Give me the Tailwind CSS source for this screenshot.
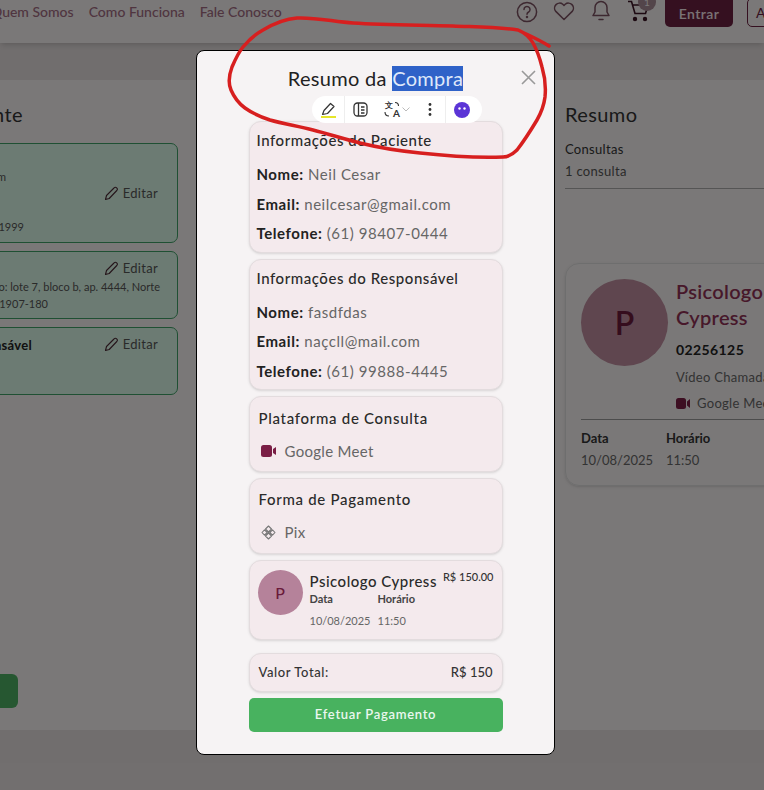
<!DOCTYPE html>
<html lang="pt-BR">
<head>
  <meta charset="UTF-8" />
  <title>Resumo da Compra</title>
  <script src="https://cdn.jsdelivr.net/npm/@tailwindcss/browser@4"></script>
</head>
<body class="font-['Lato',sans-serif] bg-[#f4f0f0] text-[#222]">
<div class="relative w-[764px] h-[790px] overflow-hidden flex flex-col">

  <!-- Header -->
  <header class="h-[43px] shrink-0 bg-[#f4f0f0] shadow-md flex justify-between items-start relative z-10">
    <nav class="flex gap-[15px] pt-[1px] -ml-[9px] text-[14px] font-medium text-[#a06a80]">
      <a>Quem Somos</a>
      <a>Como Funciona</a>
      <a>Fale Conosco</a>
    </nav>
    <div class="flex items-start -mr-[40px]">
      <svg class="mt-[1px] mr-[15px]" width="22" height="22" viewBox="0 0 22 22" fill="none" stroke="#7a5060" stroke-width="1.5"><circle cx="11" cy="11" r="9.6"/><path d="M8 8.500a3 3 0 1 1 4.600 2.500c-1 .6-1.600 1.100-1.600 2.300" stroke-linecap="round"/><circle cx="11" cy="16" r=".5"/></svg>
      <svg class="mr-[16px] mt-[1px]" width="22" height="20" viewBox="0 0 22 20" fill="none" stroke="#7a5060" stroke-width="1.5"><path d="M11 18.500 2.800 10.400a5 5 0 0 1 7-7.100L11 4.500l1.200-1.200a5 5 0 0 1 7 7.100z" stroke-linejoin="round"/></svg>
      <svg class="mr-[17px]" width="20" height="22" viewBox="0 0 20 22" fill="none" stroke="#7a5060" stroke-width="1.5"><path d="M10 1.500a6 6 0 0 0-6 6v4.500L2 15.500h16L16 12V7.500a6 6 0 0 0-6-6z" stroke-linejoin="round"/><path d="M8 19.500h4" stroke-linecap="round"/></svg>
      <div class="relative w-[24px] h-[24px] mr-[13px]">
        <svg width="22" height="22" viewBox="0 0 22 22" fill="none" stroke="#3a1524" stroke-width="1.6"><path d="M0 1.500h3.500L7 13.500h10.500L20 5H5"/><circle cx="7" cy="19" r="1.400" fill="#3a1524"/><circle cx="17" cy="19" r="1.400" fill="#3a1524"/></svg>
        <span class="absolute -top-[7px] left-[10px] w-[18px] h-[18px] rounded-full bg-[#a78a95] text-[#f4f0f0] text-[10px] text-center leading-[18px]">1</span>
      </div>
      <button class="-mt-[2px] w-[68px] h-[29px] rounded-b-[5px] bg-[#6a2140] text-[#f4e6ea] text-[14px] font-semibold tracking-[0.4px] pt-[2px]">Entrar</button>
      <button class="-mt-[2px] ml-[14px] w-[57px] h-[29px] rounded-[5px] border border-[#6a2140] text-[#6a2140] text-[14px] text-left pl-[8px]">Ajuda</button>
    </div>
  </header>

  <div class="h-[37px] shrink-0 bg-[#e3dddd]"></div>

  <!-- Conteudo da pagina -->
  <main class="flex-1 flex gap-[387px] -ml-[220px]">
    <section class="w-[398px] shrink-0 pt-[22px]">
      <h2 class="text-[20px] text-right pr-[155px] leading-[24px] tracking-[0.4px] text-[#333]">Dados do Paciente</h2>
      <div class="mt-[17px] h-[100px] rounded-[7px] border border-[#3fa066] bg-[#d9f6e6] relative text-[11px] text-[#555]">
        <p class="absolute right-[171px] top-[25px]">neilcesar@gmail.com</p>
        <p class="absolute right-[153px] top-[75px]">Nascimento: 10/07/1999</p>
        <p class="absolute right-[19px] top-[40px] flex items-center gap-[4px] text-[13px] tracking-[0.3px]"><svg width="15" height="15" viewBox="0 0 15 15" fill="none" stroke="#4a2a35" stroke-width="1.100"><path d="M1.500 13.500 2.500 9.500 10 2a1.800 1.800 0 0 1 2.800 2.500L5.200 12.500z" stroke-linejoin="round"/></svg>Editar</p>
      </div>
      <div class="mt-[8px] h-[68px] rounded-[7px] border border-[#3fa066] bg-[#d9f6e6] relative text-[11px] text-[#555]">
        <p class="absolute right-[17px] top-[27px] whitespace-nowrap">Complemento: lote 7, bloco b, ap. 4444, Norte</p>
        <p class="absolute right-[129px] top-[44px] whitespace-nowrap">Brasília - DF, 71907-180</p>
        <p class="absolute right-[19px] top-[7px] flex items-center gap-[4px] text-[13px] tracking-[0.3px]"><svg width="15" height="15" viewBox="0 0 15 15" fill="none" stroke="#4a2a35" stroke-width="1.100"><path d="M1.500 13.500 2.500 9.500 10 2a1.800 1.800 0 0 1 2.800 2.500L5.200 12.500z" stroke-linejoin="round"/></svg>Editar</p>
      </div>
      <div class="mt-[8px] h-[68px] rounded-[7px] border border-[#3fa066] bg-[#d9f6e6] relative">
        <p class="absolute right-[145px] top-[8px] text-[13px] font-bold text-[#222] whitespace-nowrap tracking-[0.3px]">Dados do Responsável</p>
        <p class="absolute right-[19px] top-[7px] flex items-center gap-[4px] text-[13px] text-[#555] tracking-[0.3px]"><svg width="15" height="15" viewBox="0 0 15 15" fill="none" stroke="#4a2a35" stroke-width="1.100"><path d="M1.500 13.500 2.500 9.500 10 2a1.800 1.800 0 0 1 2.800 2.500L5.200 12.500z" stroke-linejoin="round"/></svg>Editar</p>
      </div>
      <div class="mt-[279px] ml-[200px] w-[38px] h-[34px] rounded-[6px] bg-[#4caf63]"></div>
    </section>

    <section class="w-[240px] shrink-0 pt-[22px]">
      <h2 class="text-[20px] leading-[24px] tracking-[0.4px] text-[#333]">Resumo</h2>
      <p class="mt-[13px] text-[13px] leading-[20px] text-[#333] tracking-[0.3px]">Consultas</p>
      <p class="mt-[2px] text-[13px] leading-[20px] text-[#555] tracking-[0.3px]">1 consulta</p>
      <div class="mt-[7px] border-t border-[#aaa]"></div>
      <div class="mt-[74px] h-[223px] w-[240px] rounded-[14px] border border-[#ddd] shadow-sm px-[15px] pt-[14px]">
        <div class="flex gap-[8px]">
          <div class="w-[87px] h-[87px] shrink-0 mt-[1px] rounded-full bg-[#be8c9e] text-[#6a1a3a] text-[32px] font-semibold flex items-center justify-center">P</div>
          <div>
            <p class="text-[20px] font-semibold leading-[26px] text-[#8f3055] tracking-[0.3px]">Psicologo Cypress</p>
            <p class="mt-[9px] text-[14px] font-bold tracking-[0.4px]">02256125</p>
            <p class="mt-[8px] text-[13px] text-[#666] whitespace-nowrap tracking-[0.3px]">Vídeo Chamada</p>
            <p class="mt-[6px] text-[13px] text-[#666] flex items-center gap-[7px] whitespace-nowrap tracking-[0.3px]"><svg width="14" height="11" viewBox="0 0 14 11" fill="#7a1e45"><rect width="10" height="11" rx="2.500"/><path d="M11 3.500 14 1v9l-3-2.500z"/></svg>Google Meet</p>
          </div>
        </div>
        <div class="mt-[6px] border-t border-[#999] pt-[10px] grid grid-cols-[85px_1fr] gap-y-[6px] text-[13px] leading-[16px]">
          <p class="font-bold text-[#333]">Data</p><p class="font-bold text-[#333]">Horário</p>
          <p class="text-[#666]">10/08/2025</p><p class="text-[#666]">11:50</p>
        </div>
      </div>
    </section>
  </main>

  <footer class="h-[60px] shrink-0 bg-[#e3dddd]"></footer>

  <!-- Overlay -->
  <div class="absolute inset-0 z-20 bg-black/50"></div>

  <!-- Modal -->
  <div class="absolute z-30 left-[196px] top-[50px] w-[359px] h-[705px] rounded-[8px] border border-black bg-[#f6f3f4] flex flex-col items-center">
    <h1 class="mt-[15px] h-[25px] text-[20px] leading-[25px] tracking-[0.3px] text-[#222]">Resumo da <span class="bg-[#2f62c8] text-[#dfe8fa] inline-block">Compra</span></h1>
    <svg class="absolute left-[324px] top-[19px]" width="15" height="15" viewBox="0 0 15 15" stroke="#999" stroke-width="1.600"><path d="M1 1 14 14M14 1 1 14"/></svg>

    <div class="mt-[30px] w-[254px] flex flex-col">
      <div class="h-[132px] rounded-[12px] border border-[#e3dcde] shadow-sm bg-[#f4eaed] px-[7px] pt-[8px]">
        <h3 class="text-[15px] font-medium leading-[20px] tracking-[0.55px] text-[#2a2a2a]">Informações do Paciente</h3>
        <p class="mt-[14px] text-[15px] leading-[20px] text-[#666] tracking-[0.55px]"><b class="text-[#222]">Nome:</b> Neil Cesar</p>
        <p class="mt-[10px] text-[15px] leading-[20px] text-[#666] tracking-[0.55px]"><b class="text-[#222]">Email:</b> neilcesar@gmail.com</p>
        <p class="mt-[9px] text-[15px] leading-[20px] text-[#666] tracking-[0.55px]"><b class="text-[#222]">Telefone:</b> (61) 98407-0444</p>
      </div>
      <div class="mt-[6px] h-[131px] rounded-[12px] border border-[#e3dcde] shadow-sm bg-[#f4eaed] px-[7px] pt-[8px]">
        <h3 class="text-[15px] font-medium leading-[20px] tracking-[0.55px] text-[#2a2a2a]">Informações do Responsável</h3>
        <p class="mt-[14px] text-[15px] leading-[20px] text-[#666] tracking-[0.55px]"><b class="text-[#222]">Nome:</b> fasdfdas</p>
        <p class="mt-[9px] text-[15px] leading-[20px] text-[#666] tracking-[0.55px]"><b class="text-[#222]">Email:</b> naçcll@mail.com</p>
        <p class="mt-[10px] text-[15px] leading-[20px] text-[#666] tracking-[0.55px]"><b class="text-[#222]">Telefone:</b> (61) 99888-4445</p>
      </div>
      <div class="mt-[6px] h-[76px] rounded-[12px] border border-[#e3dcde] shadow-sm bg-[#f4eaed] px-[9px] pt-[11px]">
        <h3 class="text-[15px] font-medium leading-[20px] tracking-[0.7px] text-[#2a2a2a]">Plataforma de Consulta</h3>
        <p class="mt-[13px] flex items-center gap-[9px] text-[15px] leading-[20px] text-[#666] tracking-[0.3px]"><svg class="ml-[2px]" width="15" height="12" viewBox="0 0 15 12" fill="#7a1e45"><rect width="11" height="12" rx="2.500"/><path d="M12 4 15 2v8l-3-2z"/></svg>Google Meet</p>
      </div>
      <div class="mt-[6px] h-[76px] rounded-[12px] border border-[#e3dcde] shadow-sm bg-[#f4eaed] px-[9px] pt-[10px]">
        <h3 class="text-[15px] font-medium leading-[20px] tracking-[0.7px] text-[#2a2a2a]">Forma de Pagamento</h3>
        <p class="mt-[13px] flex items-center gap-[9px] text-[15px] leading-[20px] text-[#666] tracking-[0.3px]"><svg class="ml-[2px]" width="15" height="15" viewBox="0 0 15 15" fill="none" stroke="#777" stroke-width="1.100"><path d="M7.500 1 10.500 4 7.500 7 4.500 4zM7.500 8 10.500 11 7.500 14 4.500 11zM3.500 4.800 6.200 7.500 3.500 10.200 1 7.500zM11.500 4.800 14 7.500 11.500 10.200 8.800 7.500z" stroke-linejoin="round"/></svg>Pix</p>
      </div>
      <div class="mt-[6px] h-[80px] rounded-[12px] border border-[#e3dcde] shadow-sm bg-[#f4eaed] px-[8px] pt-[9px] flex gap-[7px]">
        <div class="w-[45px] h-[45px] shrink-0 rounded-full bg-[#b5829a] text-[#6a1a3a] text-[16px] font-medium flex items-center justify-center">P</div>
        <div class="flex-1">
          <div class="flex justify-between items-start">
            <p class="text-[15px] font-medium leading-[22px] tracking-[0.5px] text-[#2a2a2a] whitespace-nowrap">Psicologo Cypress</p>
            <p class="text-[11px] font-medium leading-[14px] text-[#333] whitespace-nowrap">R$ 150.00</p>
          </div>
          <div class="grid grid-cols-[68px_1fr] gap-y-[8px] text-[11px] leading-[14px]">
            <p class="font-bold text-[#444]">Data</p><p class="font-bold text-[#444]">Horário</p>
            <p class="text-[#666]">10/08/2025</p><p class="text-[#666]">11:50</p>
          </div>
        </div>
      </div>
      <div class="mt-[13px] h-[39px] rounded-[12px] border border-[#e3dcde] shadow-sm bg-[#f4eaed] px-[9px] flex items-center justify-between text-[13px] font-medium text-[#333]">
        <span class="tracking-[0.6px]">Valor Total:</span><span>R$ 150</span>
      </div>
      <button class="mt-[6px] h-[34px] rounded-[5px] bg-[#48b25f] text-[#eaf7ee] text-[13px] font-semibold tracking-[0.7px]">Efetuar Pagamento</button>
    </div>
  </div>

  <!-- Barra de extensao sobre a selecao -->
  <div class="absolute z-40 left-[312px] top-[96px] w-[170px] h-[27px] rounded-full bg-white flex items-center">
    <div class="w-[33px] h-full flex flex-col items-center justify-center border-r border-[#eee]">
      <svg width="15" height="14" viewBox="0 0 15 14" fill="none" stroke="#333" stroke-width="1.200"><path d="M1.500 12.500 3 8.500 9.500 1.500 13 4.500 6.500 11.500z" stroke-linejoin="round"/></svg>
      <div class="w-[15px] h-[2px] bg-[#e6e62a]"></div>
    </div>
    <svg class="ml-[8px]" width="15" height="15" viewBox="0 0 15 15" fill="none" stroke="#333" stroke-width="1.300"><rect x="1" y="1" width="13" height="13" rx="3.500"/><path d="M5.500 1v13M8 5h3.500M8 8h3.500M8 11h3.500"/></svg>
    <div class="ml-[16px] w-[16px] h-[17px] relative text-[#333] font-bold leading-none">
      <span class="absolute left-[1px] top-0 text-[8px]">文</span>
      <span class="absolute right-0 bottom-0 text-[10px]">A</span>
      <svg class="absolute inset-0" width="16" height="17" viewBox="0 0 16 17" fill="none" stroke="#333" stroke-width="1.100"><path d="M11 1.500c2 0 3.500 1.200 3.500 3.500M1 11c0 2.500 1.500 4 4 4"/></svg>
    </div>
    <svg class="ml-[2px]" width="8" height="5" viewBox="0 0 8 5" fill="none" stroke="#bbb"><path d="M.5.500 4 4 7.500.500"/></svg>
    <svg class="ml-[18px]" width="4" height="13" viewBox="0 0 4 13" fill="#333"><circle cx="2" cy="1.500" r="1.400"/><circle cx="2" cy="6.500" r="1.400"/><circle cx="2" cy="11.500" r="1.400"/></svg>
    <div class="ml-[13px] h-full border-l border-[#eee] pl-[8px] flex items-center">
      <svg width="16" height="16" viewBox="0 0 16 16"><circle cx="8" cy="8" r="8" fill="#5b34d6"/><circle cx="5.500" cy="6.500" r="1.200" fill="#fff"/><circle cx="10.500" cy="6.500" r="1.200" fill="#fff"/></svg>
    </div>
  </div>

  <!-- Anotacao a caneta -->
  <svg class="absolute z-50 inset-0 pointer-events-none" width="764" height="790" viewBox="0 0 764 790" fill="none" stroke="#d71f1f" stroke-width="3.500" stroke-linecap="round" stroke-linejoin="round">
    <path d="M549 46 C540 40 528 35 518 30 C497 27 475 27 453 26 C420 25 385 25 353 23 C335 22 315 17 297 18 C285 19 273 24 263 30 C254 35 248 41 243 47 C238 53 235 60 232 67 C229 75 228 83 231 90 C234 97 238 103 245 108 C252 113 261 117 270 120 C284 124 298 126 313 130 C329 134 344 139 360 143 C380 148 400 151 420 153 C447 156 476 158 503 157 C509 157 513 154 517 150 C524 141 531 130 537 120 C541 113 544 105 545 97 C546 87 545 77 542 67 C540 59 537 50 533 43 C530 38 525 33 518 30"/>
  </svg>
</div>
</body>
</html>
